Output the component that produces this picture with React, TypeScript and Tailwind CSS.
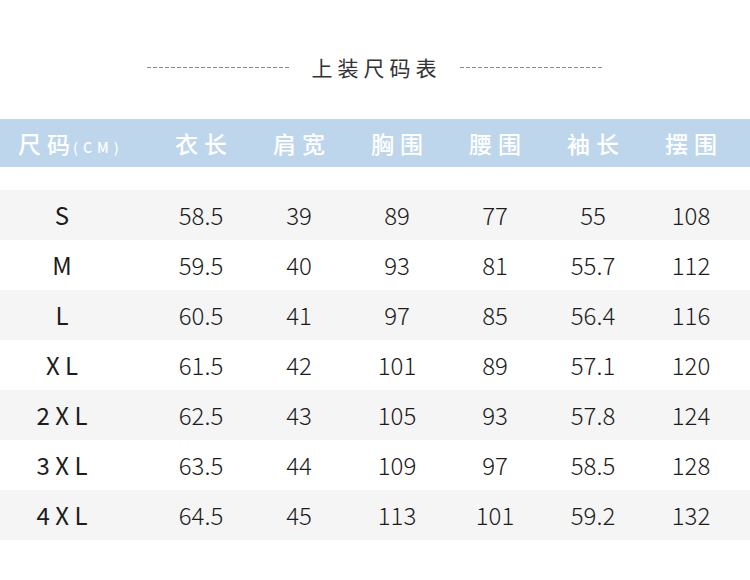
const rows = [
  ['S', '58.5', '39', '89', '77', '55', '108'],
  ['M', '59.5', '40', '93', '81', '55.7', '112'],
  ['L', '60.5', '41', '97', '85', '56.4', '116'],
  ['X L', '61.5', '42', '101', '89', '57.1', '120'],
  ['2 X L', '62.5', '43', '105', '93', '57.8', '124'],
  ['3 X L', '63.5', '44', '109', '97', '58.5', '128'],
  ['4 X L', '64.5', '45', '113', '101', '59.2', '132'],
];

const heads = ['衣长', '肩宽', '胸围', '腰围', '袖长', '摆围'];

const dash =
  'h-px bg-[linear-gradient(to_right,#8a8a8a_4px,transparent_4px)] bg-[length:6px_1px] bg-repeat-x';

export default function App() {
  return (
    <div className="w-[750px] h-[580px] bg-white overflow-hidden font-['Noto_Sans_CJK_SC','Noto_Sans',sans-serif]">
      {/* Title */}
      <div className="h-[119px] flex items-center justify-center pt-[16px]">
        <div className="flex items-center">
          <div className={`w-[144px] ${dash}`} />
          <div className="ml-[21px] mr-[18px] text-[21px] leading-none tracking-[5px] text-[#333]">上装尺码表</div>
          <div className={`w-[144px] ${dash}`} />
        </div>
      </div>

      {/* Header bar */}
      <div className="h-[48px] bg-[#bed6ec] grid grid-cols-[152px_repeat(6,98px)] items-center text-white">
        <div className="pl-[18px] flex items-baseline">
          <span className="text-[23px] font-medium tracking-[6px]">尺码</span>
          <span className="text-[14px] font-medium tracking-[5px] -ml-[3px]">(CM)</span>
        </div>
        {heads.map((h) => (
          <div key={h} className="text-center text-[23px] font-medium tracking-[6px] pl-[6px]">
            {h}
          </div>
        ))}
      </div>

      {/* Rows */}
      <div className="mt-[23px]">
        {rows.map((r, i) => (
          <div
            key={r[0]}
            className={`h-[50px] grid grid-cols-[152px_repeat(6,98px)] items-center text-[24px] font-light text-[#1c1c1c] ${
              i % 2 === 0 ? 'bg-[#f5f5f5]' : 'bg-white'
            }`}
          >
            <div className="w-[124px] text-center font-normal whitespace-pre">{r[0]}</div>
            {r.slice(1).map((v, j) => (
              <div key={j} className="text-center">
                {v}
              </div>
            ))}
          </div>
        ))}
      </div>
    </div>
  );
}
